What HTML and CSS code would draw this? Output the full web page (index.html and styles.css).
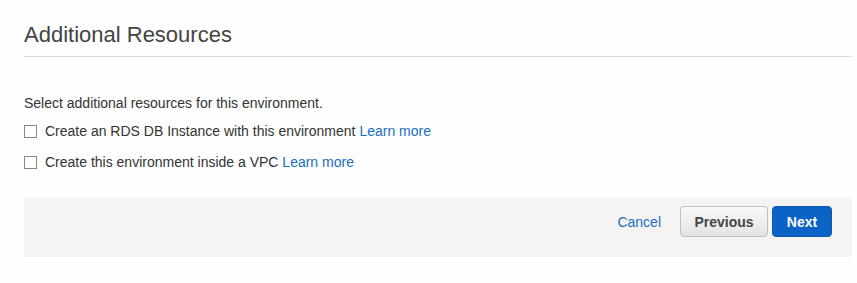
FILE: index.html
```html
<!DOCTYPE html>
<html lang="en">
<head>
    <meta charset="UTF-8">
    <title>Additional Resources</title>
    <link rel="stylesheet" href="styles.css">
</head>
<body>
    <div class="page">
        <h2 class="section-title">Additional Resources</h2>
        <div class="section-body">
            <p class="intro">Select additional resources for this environment.</p>
            <label class="option">
                <input type="checkbox" class="option-check">
                <span>Create an RDS DB Instance with this environment <a href="#" class="link">Learn more</a></span>
            </label>
            <label class="option">
                <input type="checkbox" class="option-check">
                <span>Create this environment inside a VPC <a href="#" class="link">Learn more</a></span>
            </label>
        </div>
        <div class="footer">
            <a href="#" class="link cancel">Cancel</a>
            <button type="button" class="btn btn-previous">Previous</button>
            <button type="button" class="btn btn-next">Next</button>
        </div>
    </div>
</body>
</html>
```

FILE: styles.css
```css
body {
    margin: 0;
    background-color: #fdfefd;
    font-family: "Liberation Sans", Arial, sans-serif;
    color: #333333;
}
.page {
    padding: 22px 5px 0 24px;
}
.section-title {
    margin: 0;
    padding-bottom: 9px;
    border-bottom: 1px solid #dddddd;
    font-size: 22px;
    font-weight: normal;
    color: #444444;
    line-height: 25px;
}
.section-body {
    padding-top: 38px;
    display: flex;
    flex-direction: column;
    gap: 15px;
}
.intro {
    margin: 0 0 -3px;
    font-size: 14px;
    line-height: 16px;
}
.option {
    display: flex;
    align-items: center;
    gap: 8px;
    font-size: 14px;
    line-height: 16px;
}
.option-check {
    appearance: none;
    margin: 0;
    width: 13px;
    height: 13px;
    border: 1px solid #888888;
    background-color: #ffffff;
}
.link {
    color: #1a6fc4;
    text-decoration: none;
}
.footer {
    margin-top: 28px;
    padding: 8px 20px 20px 0;
    background-color: #f5f4f2;
    display: flex;
    align-items: center;
    justify-content: flex-end;
}
.cancel {
    font-size: 14px;
    margin-right: 19px;
}
.btn {
    height: 31px;
    border-radius: 4px;
    font-family: "Liberation Sans", Arial, sans-serif;
    font-size: 14px;
    font-weight: bold;
    cursor: pointer;
}
.btn-previous {
    width: 88px;
    margin-right: 4px;
    border: 1px solid #bfbfbf;
    background: linear-gradient(#f9f9f9, #e3e3e3);
    color: #444444;
}
.btn-next {
    width: 60px;
    border: 1px solid #0c5aad;
    background-color: #0b63c6;
    color: #ffffff;
}
```
